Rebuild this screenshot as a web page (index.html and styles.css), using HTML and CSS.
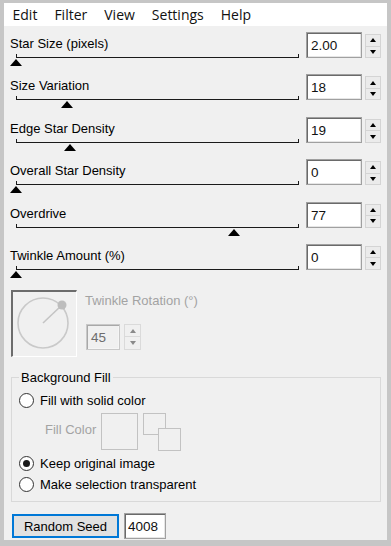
FILE: index.html
```html
<!DOCTYPE html>
<html>
<head>
<meta charset="utf-8">
<link rel="stylesheet" href="styles.css">
</head>
<body>
<div class="window">
  <div class="menubar">
    <span>Edit</span><span>Filter</span><span>View</span><span>Settings</span><span>Help</span>
  </div>
  <div class="content">
    <div class="sliders">
      <div class="row">
        <div class="left"><div class="label">Star Size (pixels)</div><div class="slider"><div class="track"></div><div class="thumb" style="left:0%"></div></div></div>
        <div class="num">2.00</div>
        <div class="spin"><div class="btn"><i class="up"></i></div><div class="btn"><i class="down"></i></div></div>
      </div>
      <div class="row">
        <div class="left"><div class="label">Size Variation</div><div class="slider"><div class="track"></div><div class="thumb" style="left:18%"></div></div></div>
        <div class="num">18</div>
        <div class="spin"><div class="btn"><i class="up"></i></div><div class="btn"><i class="down"></i></div></div>
      </div>
      <div class="row">
        <div class="left"><div class="label">Edge Star Density</div><div class="slider"><div class="track"></div><div class="thumb" style="left:19%"></div></div></div>
        <div class="num">19</div>
        <div class="spin"><div class="btn"><i class="up"></i></div><div class="btn"><i class="down"></i></div></div>
      </div>
      <div class="row">
        <div class="left"><div class="label">Overall Star Density</div><div class="slider"><div class="track"></div><div class="thumb" style="left:0%"></div></div></div>
        <div class="num">0</div>
        <div class="spin"><div class="btn"><i class="up"></i></div><div class="btn"><i class="down"></i></div></div>
      </div>
      <div class="row">
        <div class="left"><div class="label">Overdrive</div><div class="slider"><div class="track"></div><div class="thumb" style="left:77%"></div></div></div>
        <div class="num">77</div>
        <div class="spin"><div class="btn"><i class="up"></i></div><div class="btn"><i class="down"></i></div></div>
      </div>
      <div class="row">
        <div class="left"><div class="label">Twinkle Amount (%)</div><div class="slider"><div class="track"></div><div class="thumb" style="left:0%"></div></div></div>
        <div class="num">0</div>
        <div class="spin"><div class="btn"><i class="up"></i></div><div class="btn"><i class="down"></i></div></div>
      </div>
    </div>

    <div class="rotation">
      <div class="dial">
        <svg width="63" height="64" viewBox="0 0 63 64">
          <circle cx="30" cy="31" r="25" fill="none" stroke="#c9c9c9" stroke-width="1.6"/>
          <line x1="30" y1="31" x2="49" y2="13" stroke="#c4c4c4" stroke-width="1.6"/>
          <circle cx="49" cy="13" r="4.5" fill="#bdbdbd"/>
        </svg>
      </div>
      <div class="rot-side">
        <div class="rot-label">Twinkle Rotation (°)</div>
        <div class="rot-input">
          <div class="num small disabled">45</div>
          <div class="spin disabled"><div class="btn"><i class="up"></i></div><div class="btn"><i class="down"></i></div></div>
        </div>
      </div>
    </div>

    <fieldset class="group">
      <legend>Background Fill</legend>
      <div class="radio-row"><span class="radio"></span><span>Fill with solid color</span></div>
      <div class="fill-row">
        <span class="fill-label">Fill Color</span>
        <span class="swatch"></span>
        <svg class="swap" width="40" height="38" viewBox="0 0 40 38">
          <rect x="1.5" y="0.5" width="22" height="21" fill="none" stroke="#c2c2c2"/>
          <rect x="16.5" y="15.5" width="22" height="22" fill="#f0f0f0" stroke="#c2c2c2"/>
        </svg>
      </div>
      <div class="radio-row"><span class="radio checked"></span><span>Keep original image</span></div>
      <div class="radio-row"><span class="radio"></span><span>Make selection transparent</span></div>
    </fieldset>

    <div class="bottom">
      <div class="button">Random Seed</div>
      <div class="num seed">4008</div>
    </div>
  </div>
</div>
</body>
</html>
```
FILE: styles.css
```css
html, body {
  margin: 0;
  padding: 0;
}

body {
  font-family: "Liberation Sans", Arial, sans-serif;
  font-size: 13px;
  color: #000;
}

.window {
  width: 391px;
  height: 546px;
  box-sizing: border-box;
  background: #c6c6c6;
  padding: 3px 4px 6px 4px;
  display: flex;
  flex-direction: column;
}

.menubar {
  height: 23px;
  flex: none;
  background: #fff;
  display: flex;
  align-items: center;
  font-family: "Open Sans", sans-serif;
  font-size: 14px;
  color: #111;
}

.menubar span {
  padding: 0 8.5px;
}

.content {
  flex: 1;
  background: #f0f0f0;
  padding: 1px 0 0 6px;
}

.row {
  height: 42.4px;
  display: flex;
}

.left {
  width: 296px;
  padding-top: 10px;
  box-sizing: border-box;
}

.label {
  line-height: 14px;
  height: 14px;
  white-space: nowrap;
}

.slider {
  position: relative;
  margin: 3px 0 0 6px;
  width: 283px;
  height: 12px;
}

.track {
  height: 3px;
  border: 1px solid #1a1a1a;
  border-top: none;
}

.thumb {
  position: absolute;
  top: 5px;
  margin-left: -6px;
  width: 0;
  height: 0;
  border-left: 6.5px solid transparent;
  border-right: 6.5px solid transparent;
  border-bottom: 7px solid #000;
}

.num {
  margin-top: 5px;
  width: 56px;
  height: 26px;
  box-sizing: border-box;
  border: 1px solid #a0a0a0;
  box-shadow: inset 1px 1px 0 #6a6a6a, inset -1px -1px 0 #e6e6e6;
  background: #fff;
  font-size: 13.5px;
  line-height: 24px;
  padding: 1px 0 0 4px;
  color: #111;
}

.spin {
  margin: 7px 0 0 3px;
  width: 16px;
  height: 24px;
  display: flex;
  flex-direction: column;
}

.spin .btn {
  flex: 1;
  box-sizing: border-box;
  border: 1px solid #d4d4d4;
  background: #ebebeb;
  display: flex;
  align-items: center;
  justify-content: center;
}

.spin .btn + .btn {
  border-top: none;
}

.up {
  width: 0;
  height: 0;
  border-left: 3.5px solid transparent;
  border-right: 3.5px solid transparent;
  border-bottom: 4px solid #000;
}

.down {
  width: 0;
  height: 0;
  border-left: 3.5px solid transparent;
  border-right: 3.5px solid transparent;
  border-top: 4px solid #000;
}

/* rotation */
.rotation {
  display: flex;
  margin: 8.6px 0 0 1px;
}

.dial {
  width: 66px;
  height: 67px;
  box-sizing: border-box;
  border-top: 2px solid #6c6c6c;
  border-left: 2px solid #6c6c6c;
  border-right: 1px solid #fff;
  border-bottom: 1px solid #fff;
}

.dial svg {
  display: block;
}

.rot-side {
  margin-left: 8px;
  padding-top: 4px;
}

.rot-label {
  color: #a3a3a3;
  line-height: 14px;
  white-space: nowrap;
}

.rot-input {
  display: flex;
  margin-top: 16px;
  margin-left: 1px;
}

.num.small {
  margin-top: 0;
  width: 34px;
}

.num.disabled {
  background: #f0f0f0;
  border-color: #c8c8c8;
  box-shadow: inset 1px 1px 0 #a8a8a8, inset -1px -1px 0 #f5f5f5;
  color: #6d6d6d;
}

.spin.disabled {
  margin: 0 0 0 4px;
  width: 17px;
  height: 26px;
}

.spin.disabled .btn {
  background: #f0f0f0;
  border-color: #dadada;
}

.spin.disabled .up {
  border-bottom-color: #8a8a8a;
}

.spin.disabled .down {
  border-top-color: #8a8a8a;
}

/* group */
.group {
  margin: 13.5px 0 0 1px;
  width: 370px;
  box-sizing: border-box;
  border: 1px solid #d9d9d9;
  padding: 4.5px 0 6px 7px;
  min-width: 0;
}

.group legend {
  padding: 0 2px;
  line-height: 15px;
  font-size: 13px;
}

.radio-row {
  height: 21px;
  display: flex;
  align-items: center;
  gap: 6px;
}

.radio {
  width: 15px;
  height: 15px;
  box-sizing: border-box;
  border: 1px solid #333;
  border-radius: 50%;
  background: #fff;
  display: flex;
  align-items: center;
  justify-content: center;
}

.radio.checked::after {
  content: "";
  width: 7px;
  height: 7px;
  border-radius: 50%;
  background: #1a1a1a;
}

.fill-row {
  height: 37px;
  margin: 2.5px 0;
  display: flex;
  align-items: center;
}

.fill-label {
  margin-left: 26px;
  width: 56px;
  color: #a3a3a3;
  padding-bottom: 4px;
}

.swatch {
  width: 37px;
  height: 37px;
  box-sizing: border-box;
  border: 1px solid #c2c2c2;
}

.swap {
  margin-left: 4px;
  display: block;
}

/* bottom */
.bottom {
  display: flex;
  align-items: flex-start;
  margin: 12.5px 0 0 2px;
  gap: 5px;
}

.button {
  width: 107px;
  height: 24px;
  box-sizing: border-box;
  border: 1px solid #0078d7;
  box-shadow: inset 0 0 0 1px #0078d7;
  background: #e1e1e1;
  display: flex;
  align-items: center;
  justify-content: center;
  font-size: 13px;
}

.num.seed {
  margin-top: -1px;
  width: 42px;
  height: 26px;
  padding-left: 3px;
}
```
